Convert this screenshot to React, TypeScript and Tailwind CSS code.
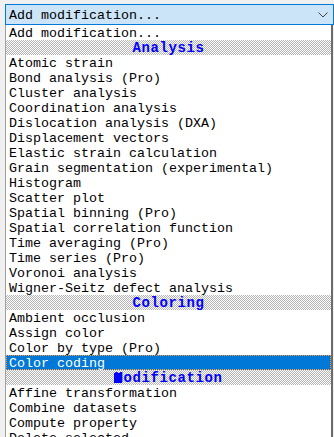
type Row = { label: string; kind?: 'header' | 'selected' };

const rows: Row[] = [
  { label: 'Add modification...' },
  { label: 'Analysis', kind: 'header' },
  { label: 'Atomic strain' },
  { label: 'Bond analysis (Pro)' },
  { label: 'Cluster analysis' },
  { label: 'Coordination analysis' },
  { label: 'Dislocation analysis (DXA)' },
  { label: 'Displacement vectors' },
  { label: 'Elastic strain calculation' },
  { label: 'Grain segmentation (experimental)' },
  { label: 'Histogram' },
  { label: 'Scatter plot' },
  { label: 'Spatial binning (Pro)' },
  { label: 'Spatial correlation function' },
  { label: 'Time averaging (Pro)' },
  { label: 'Time series (Pro)' },
  { label: 'Voronoi analysis' },
  { label: 'Wigner-Seitz defect analysis' },
  { label: 'Coloring', kind: 'header' },
  { label: 'Ambient occlusion' },
  { label: 'Assign color' },
  { label: 'Color by type (Pro)' },
  { label: 'Color coding', kind: 'selected' },
  { label: 'Modification', kind: 'header' },
  { label: 'Affine transformation' },
  { label: 'Combine datasets' },
  { label: 'Compute property' },
  { label: 'Delete selected' },
];

const mono = "font-['Liberation_Mono','DejaVu_Sans_Mono',monospace] text-[13.33px]";

function HeaderRow({ label }: { label: string }) {
  // the "M" of Modification shows up as a solid block in the capture
  const first = label === 'Modification';
  return (
    <div className="h-[15px] leading-[17px] text-center font-bold text-[14px] tracking-[0.6px] text-[#0000ff] bg-[conic-gradient(#b4b4b4_25%,#ffffff_0_50%,#b4b4b4_0_75%,#ffffff_0)] bg-[length:2px_2px]">
      {first ? (
        <>
          <span className="inline-block w-[8px] h-[10px] leading-[10px] bg-[#0000ff] text-[#0000ff] align-baseline mr-[1px]">M</span>
          {label.slice(1)}
        </>
      ) : (
        label
      )}
    </div>
  );
}

export default function App() {
  return (
    <div className={`w-[334px] h-[437px] overflow-hidden bg-[#f0f0f0] pt-[4px] pl-[5px] ${mono}`}>
      <div className="h-[21px] border border-[#0078d7] bg-[#cce4f7] flex items-center justify-between pl-[3px] pr-[5px] text-black">
        <span className="leading-[17px] pt-[1px]">Add modification...</span>
        <svg width="10" height="6" viewBox="0 0 10 6" className="text-[#444]">
          <polyline points="0.5,0.5 5,5 9.5,0.5" fill="none" stroke="currentColor" strokeWidth="1" />
        </svg>
      </div>
      <div className="w-[328px] bg-white border-l border-[#a0a0a0] border-r-2 border-r-[#6b6b6b]">
        {rows.map((r) =>
          r.kind === 'header' ? (
            <HeaderRow key={r.label} label={r.label} />
          ) : r.kind === 'selected' ? (
            <div
              key={r.label}
              className="h-[15px] leading-[15px] pl-[2px] bg-[#0078d7] text-white border border-dotted border-[#ff9a3c] whitespace-nowrap"
            >
              {r.label}
            </div>
          ) : (
            <div key={r.label} className="h-[15px] leading-[17px] pl-[3px] text-black whitespace-nowrap">
              {r.label}
            </div>
          )
        )}
      </div>
    </div>
  );
}
